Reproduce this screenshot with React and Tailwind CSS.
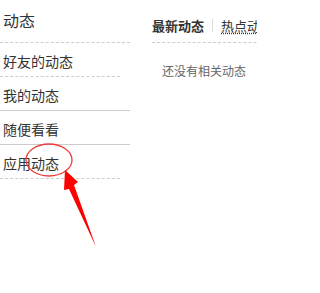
const font = { fontFamily: '"Noto Sans CJK SC", "Liberation Sans", sans-serif' };

const items = [
  { label: "好友的动态", line: "border-dashed w-[120px]" },
  { label: "我的动态", line: "border-solid w-[130px]" },
  { label: "随便看看", line: "border-solid w-[130px]" },
  { label: "应用动态", line: "border-dashed w-[120px]" },
];

const App = () => {
  return (
    <div className="relative w-[257px] h-[293px] overflow-hidden bg-white flex" style={font}>
      <div className="w-[130px] shrink-0 flex flex-col">
        <div className="h-[43px] border-b border-dashed border-[#cccccc] flex items-center pl-[3px] pb-[3px]">
          <p className="text-[16px] leading-none text-[#333333]">动态</p>
        </div>
        {items.map((item) => (
          <div key={item.label} className={`h-[34px] border-b border-[#cccccc] flex items-center pl-[3px] pt-[2px] ${item.line}`}>
            <p className="text-[14px] leading-none text-[#333333] whitespace-nowrap">{item.label}</p>
          </div>
        ))}
      </div>

      <div className="ml-[22px] flex-1 min-w-[140px] flex flex-col">
        <div className="h-[43px] border-b border-dashed border-[#cccccc] flex items-center gap-[8px] pt-[9px] whitespace-nowrap">
          <span className="text-[13px] leading-none font-bold text-[#333333]">最新动态</span>
          <span className="w-px h-[13px] bg-[#dddddd]"></span>
          <span className="text-[13px] leading-none text-[#333333] underline decoration-dotted underline-offset-2">热点动态</span>
        </div>
        <p className="mt-[22px] pl-[10px] text-[12px] leading-none text-[#666666] whitespace-nowrap">还没有相关动态</p>
      </div>

      <svg className="absolute left-0 top-0 pointer-events-none" width="257" height="293" viewBox="0 0 257 293">
        <ellipse cx="49" cy="160" rx="23" ry="16" fill="none" stroke="#f03c3c" strokeWidth="1.3" />
        <polygon points="65,170 78,182 74,185 96,247 69,189 64,190" fill="#ff0000" />
      </svg>
    </div>
  );
};

export default App;
